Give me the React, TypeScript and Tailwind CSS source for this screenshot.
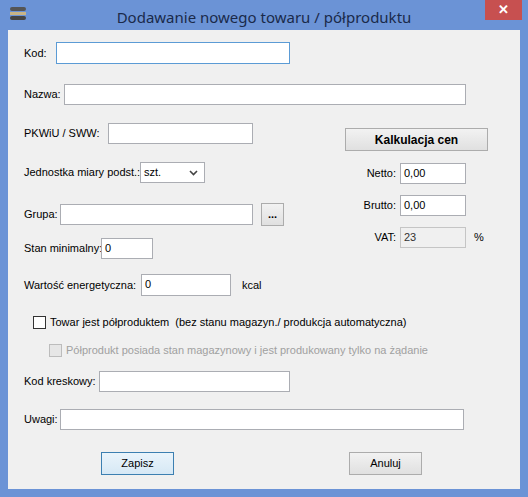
import React from "react";

const inp = "h-[21px] border border-[#abadb3] bg-white text-[11px] px-[3px] leading-[19px]";

function Row({ mt, h = 21, children, className = "" }: { mt: number; h?: number; children: React.ReactNode; className?: string }) {
  return (
    <div className={"flex items-center " + className} style={{ marginTop: mt, height: h }}>
      {children}
    </div>
  );
}

function L({ w, children }: { w: number; children: React.ReactNode }) {
  return <span className="shrink-0 whitespace-nowrap" style={{ width: w }}>{children}</span>;
}

export default function App() {
  return (
    <div className="w-[528px] h-[497px] bg-[#6b93d6] flex flex-col text-[11px] text-black" style={{ fontFamily: "'Liberation Sans', Arial, sans-serif" }}>
      <div className="h-[30px] flex items-start relative shrink-0">
        <div className="absolute left-[10px] top-[7px] w-[16px] h-[13px] flex flex-col gap-[1px]">
          <div className="h-[4px] bg-[#555] rounded-sm" />
          <div className="h-[3px] bg-[#c8b486]" />
          <div className="h-[4px] bg-[#444] rounded-sm" />
        </div>
        <div className="flex-1 text-center text-[15px] text-[#1a2a4a] mt-[6px]" style={{ fontFamily: "'Noto Sans', 'Liberation Sans', sans-serif" }}>Dodawanie nowego towaru / półproduktu</div>
        <div className="absolute right-[6px] top-0 w-[37px] h-[20px] bg-[#c75050] flex items-center justify-center text-white text-[13px] font-bold">✕</div>
      </div>
      <div className="mx-[8px] mb-[8px] flex-1 bg-[#f0f0f0] pl-[16px] flex flex-col">
        <Row mt={12} h={22}>
          <L w={32}>Kod:</L>
          <div className="w-[234px] h-[22px] border border-[#5b9bd5] bg-white" />
        </Row>
        <Row mt={20} h={20}>
          <L w={40}>Nazwa:</L>
          <div className={inp + " w-[402px] h-[20px]"} />
        </Row>
        <div className="flex">
          <div className="w-[321px] flex flex-col">
            <Row mt={19}>
              <L w={84}>PKWiU / SWW:</L>
              <div className={inp + " w-[145px]"} />
            </Row>
            <Row mt={18}>
              <L w={116}>Jednostka miary podst.:</L>
              <div className={inp + " w-[65px] flex items-center justify-between pr-[6px]"}>
                <span>szt.</span>
                <svg width="9" height="6" viewBox="0 0 9 6"><path d="M1 1 L4.5 4.5 L8 1" stroke="#444" strokeWidth="1.6" fill="none" /></svg>
              </div>
            </Row>
            <Row mt={20} h={23}>
              <L w={36}>Grupa:</L>
              <div className={inp + " w-[193px]"} />
              <div className="ml-[8px] w-[23px] h-[23px] border border-[#acacac] bg-gradient-to-b from-[#f2f2f2] to-[#e0e0e0] flex items-center justify-center font-bold">...</div>
            </Row>
            <Row mt={12}>
              <L w={77}>Stan minimalny:</L>
              <div className={inp + " w-[52px]"}>0</div>
            </Row>
            <Row mt={15} h={22}>
              <L w={117}>Wartość energetyczna:</L>
              <div className={inp + " w-[90px] h-[22px]"}>0</div>
              <span className="ml-[11px]">kcal</span>
            </Row>
          </div>
          <div className="flex flex-col">
            <div className="mt-[24px] w-[143px] h-[23px] border border-[#acacac] bg-gradient-to-b from-[#f2f2f2] to-[#e0e0e0] flex items-center justify-center font-bold text-[12px]">Kalkulacja cen</div>
            <Row mt={12}>
              <span className="w-[51px] text-right">Netto:</span>
              <div className={inp + " ml-[4px] w-[66px]"}>0,00</div>
            </Row>
            <Row mt={11}>
              <span className="w-[51px] text-right">Brutto:</span>
              <div className={inp + " ml-[4px] w-[66px]"}>0,00</div>
            </Row>
            <Row mt={11}>
              <span className="w-[51px] text-right">VAT:</span>
              <div className="ml-[4px] w-[66px] h-[21px] border border-[#c5c5c5] bg-[#f0f0f0] px-[3px] leading-[19px] text-[#333]">23</div>
              <span className="ml-[8px]">%</span>
            </Row>
          </div>
        </div>
        <Row mt={20} h={13} className="ml-[9px]">
          <div className="w-[13px] h-[13px] border border-[#333] bg-white" />
          <span className="ml-[4px]">Towar jest półproduktem&nbsp; (bez stanu magazyn./ produkcja automatyczna)</span>
        </Row>
        <Row mt={15} h={13} className="ml-[25px] text-[#a0a0a0]">
          <div className="w-[13px] h-[13px] border border-[#bcbcbc] bg-[#e6e6e6]" />
          <span className="ml-[4px]">Półprodukt posiada stan magazynowy i jest produkowany tylko na żądanie</span>
        </Row>
        <Row mt={14}>
          <L w={75}>Kod kreskowy:</L>
          <div className={inp + " w-[191px]"} />
        </Row>
        <Row mt={17} h={20}>
          <L w={36}>Uwagi:</L>
          <div className={inp + " w-[404px] h-[20px]"} />
        </Row>
        <div className="flex mt-[23px]">
          <div className="ml-[77px] w-[73px] h-[23px] border border-[#3c7fb1] bg-gradient-to-b from-[#eaf4fb] to-[#d6e8f5] flex items-center justify-center">Zapisz</div>
          <div className="ml-[175px] w-[73px] h-[23px] border border-[#acacac] bg-gradient-to-b from-[#f2f2f2] to-[#e0e0e0] flex items-center justify-center">Anuluj</div>
        </div>
      </div>
    </div>
  );
}
